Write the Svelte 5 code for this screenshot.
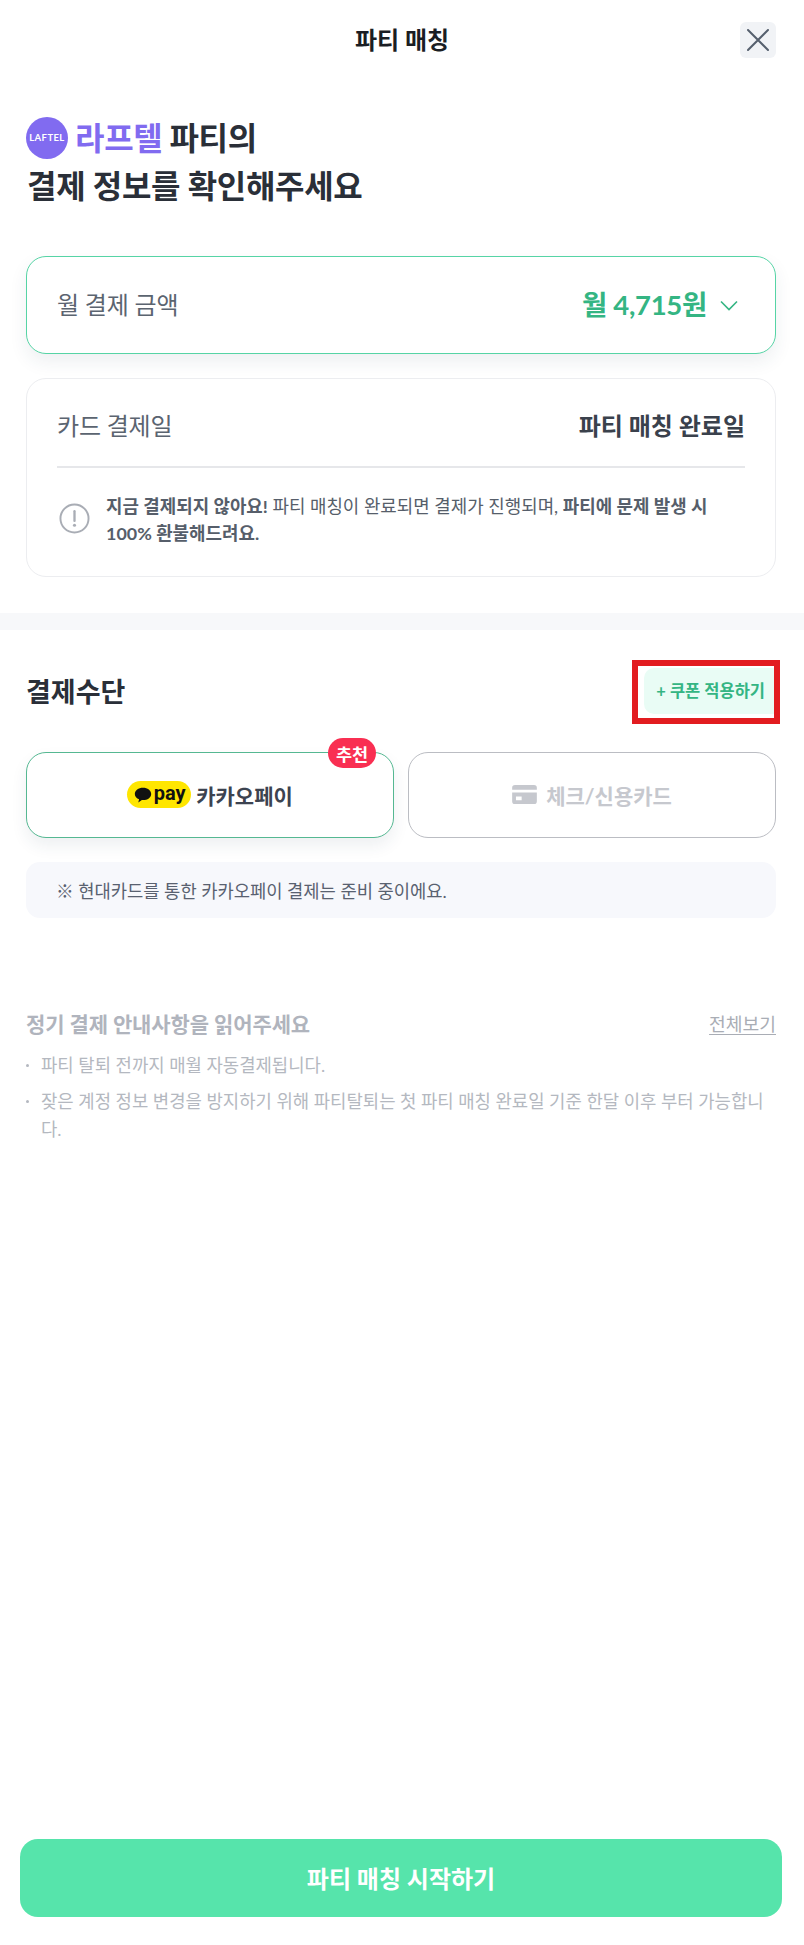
<script>
  const notices = [
    '파티 탈퇴 전까지 매월 자동결제됩니다.',
    '잦은 계정 정보 변경을 방지하기 위해 파티탈퇴는 첫 파티 매칭 완료일 기준 한달 이후 부터 가능합니다.'
  ];
</script>

<div class="page">
  <header class="top">
    <h1>파티 매칭</h1>
    <button class="close" aria-label="닫기">
      <svg width="22" height="22" viewBox="0 0 22 22" fill="none" stroke="#56606e" stroke-width="2" stroke-linecap="round"><path d="M1 1 21 21M21 1 1 21"/></svg>
    </button>
  </header>

  <section class="intro">
    <div class="line">
      <span class="logo">LAFTEL</span>
      <span class="brand">라프텔</span>
      <span>파티의</span>
    </div>
    <div class="line second">결제 정보를 확인해주세요</div>
  </section>

  <section class="cards">
    <div class="card price">
      <span class="label">월 결제 금액</span>
      <span class="amount">월 4,715원
        <svg width="18" height="11" viewBox="0 0 18 11" fill="none" stroke="#34b583" stroke-width="1.6"><path d="M1 1.500 9 9.500 17 1.500"/></svg>
      </span>
    </div>
    <div class="card detail">
      <div class="row">
        <span class="label">카드 결제일</span>
        <strong>파티 매칭 완료일</strong>
      </div>
      <div class="info">
        <svg width="31" height="31" viewBox="0 0 32 32" fill="none" stroke="#a9adb5"><circle cx="16" cy="16" r="14.500" stroke-width="2"/><path d="M16 8.500v10" stroke-width="2.400" stroke-linecap="round"/><circle cx="16" cy="23" r="1.600" fill="#a9adb5" stroke="none"/></svg>
        <p><b>지금 결제되지 않아요!</b> 파티 매칭이 완료되면 결제가 진행되며, <b>파티에 문제 발생 시 100% 환불해드려요.</b></p>
      </div>
    </div>
  </section>

  <div class="band"></div>

  <section class="pay">
    <div class="pay-head">
      <h2>결제수단</h2>
      <div class="coupon-mark"><button class="coupon">+ 쿠폰 적용하기</button></div>
    </div>
    <div class="methods">
      <button class="method active">
        <span class="badge">추천</span>
        <span class="kakao">
          <svg width="20" height="18" viewBox="0 0 22 19"><path fill="#111" d="M11 1.500c5 0 9 3 9 6.800s-4 6.800-9 6.800l-1.200-.1-4 2.700.9-3.600C4 13.200 2 10.900 2 8.300 2 4.500 6 1.500 11 1.500z"/></svg>
          <span>pay</span>
        </span>
        카카오페이
      </button>
      <button class="method">
        <svg width="25" height="19" viewBox="0 0 26 20"><path fill="#c6c8ce" d="M3 0h20a3 3 0 0 1 3 3v2H0V3a3 3 0 0 1 3-3zM0 8h26v9a3 3 0 0 1-3 3H3a3 3 0 0 1-3-3zm4 4v4h6v-4z"/></svg>
        체크/신용카드
      </button>
    </div>
    <div class="note">※ 현대카드를 통한 카카오페이 결제는 준비 중이에요.</div>
  </section>

  <section class="guide">
    <div class="guide-head">
      <h3>정기 결제 안내사항을 읽어주세요</h3>
      <a href="#all">전체보기</a>
    </div>
    <ul>
      {#each notices as notice}
        <li>{notice}</li>
      {/each}
    </ul>
  </section>

  <div class="cta"><button>파티 매칭 시작하기</button></div>
</div>

<style>
  :global(body) { margin: 0; background: #fff; }
  * { box-sizing: border-box; }
  .page {
    width: 804px; min-height: 1945px; display: flex; flex-direction: column;
    font-family: Lato, "Noto Sans CJK KR", sans-serif; color: #2a2f38; background: #fff;
  }
  button { font-family: inherit; border: 0; background: none; padding: 0; }
  h1, h2, h3, p, ul { margin: 0; padding: 0; }

  .top { position: relative; height: 80px; display: flex; align-items: center; justify-content: center; }
  h1 { font-size: 24px; font-weight: 700; color: #1a1d23; line-height: 1; }
  .close {
    position: absolute; left: 740px; top: 22px; width: 36px; height: 36px; border-radius: 6px;
    background: #f1f3f6; display: flex; align-items: center; justify-content: center;
  }

  .intro { padding: 36px 26px 0; height: 176px; font-size: 32px; font-weight: 700; }
  .line { display: flex; align-items: center; gap: 7px; height: 44px; line-height: 44px; letter-spacing: -0.3px; }
  .second { margin-top: 4px; padding-left: 1px; }
  .logo {
    width: 42px; height: 42px; border-radius: 50%; background: #816bf0; color: #fff;
    font-size: 9.500px; font-weight: 700; display: flex; align-items: center; justify-content: center; letter-spacing: .4px;
  }
  .brand { color: #816bf0; }

  .cards { padding: 0 28px 0 26px; display: flex; flex-direction: column; gap: 24px; }
  .card { width: 750px; background: #fff; border-radius: 20px; }
  .price {
    height: 98px; border: 1px solid #56d4a5; padding: 0 37px 4px 30px;
    display: flex; align-items: center; justify-content: space-between;
    box-shadow: 0 8px 18px rgba(40, 60, 90, .08);
  }
  .label { font-size: 24px; color: #5b6470; font-weight: 400; letter-spacing: -0.2px; }
  .amount { font-size: 27.500px; font-weight: 700; color: #34b583; display: flex; align-items: center; gap: 13px; letter-spacing: -0.3px; }
  .amount svg { margin-top: 4px; }
  .detail { height: 199px; border: 1px solid #ecedf0; padding: 0 30px; }
  .row {
    height: 89px; border-bottom: 2px solid #e6e7ea; padding-top: 3px;
    display: flex; align-items: center; justify-content: space-between;
  }
  .row strong { font-size: 24px; font-weight: 700; color: #3a414c; }
  .info { display: flex; align-items: flex-start; gap: 16px; padding: 25px 2px 0 2px; }
  .info svg { flex: none; margin-top: 10px; }
  .info p { font-size: 17.900px; line-height: 27px; color: #565e6a; }
  .info b { font-weight: 700; }

  .band { height: 17px; background: #f7f8fa; margin-top: 36px; }

  .pay { padding: 0 28px 0 26px; }
  .pay-head { height: 122px; display: flex; align-items: flex-start; justify-content: space-between; position: relative; }
  h2 { font-size: 27px; font-weight: 700; margin-top: 42px; line-height: 40px; color: #2a2f38; }
  .coupon-mark {
    position: absolute; right: -4px; top: 30px; width: 148px; height: 64px;
    border: 6px solid #e21c20; background: #fff; padding: 2px 0 0 6px;
  }
  .coupon {
    width: 100%; height: 46px; background: #e9fcf5; color: #34b583; border-radius: 10px 0 0 10px;
    font-size: 16.500px; font-weight: 700; white-space: nowrap; text-align: right; padding: 0 9px 3px 0;
  }
  .methods { display: grid; grid-template-columns: 368px 368px; gap: 14px; }
  .method {
    position: relative; height: 86px; border-radius: 20px; border: 1px solid #bbbdc3; background: #fff;
    display: flex; align-items: center; justify-content: center; gap: 9px; padding-bottom: 1px;
    font-size: 21px; font-weight: 700; color: #c6c8ce;
  }
  .active { border-color: #55b892; color: #3c4350; box-shadow: 0 8px 16px rgba(40, 60, 90, .08); gap: 5px; }
  .badge {
    position: absolute; left: 301px; top: -15px; width: 48px; height: 30px; border-radius: 15px;
    background: #f92f52; color: #fff; font-size: 17.500px; font-weight: 700;
    display: flex; align-items: center; justify-content: center;
  }
  .kakao {
    width: 64px; height: 27px; border-radius: 14px; background: #ffe600; color: #111;
    display: flex; align-items: center; justify-content: center; gap: 1px;
    font-family: Roboto, sans-serif; font-size: 20px; font-weight: 700; line-height: 1;
  }
  .kakao span { margin-top: -3px; }
  .note {
    margin-top: 24px; width: 750px; height: 56px; border-radius: 14px; background: #f7f8fc;
    display: flex; align-items: center; padding: 0 0 1px 30px; font-size: 17.700px; color: #596170;
  }

  .guide { padding: 84px 28px 0 26px; }
  .guide-head { display: flex; justify-content: space-between; align-items: center; height: 42px; }
  h3 { font-size: 21px; font-weight: 700; color: #b0b4bd; letter-spacing: -0.1px; }
  .guide-head a { font-size: 18.200px; color: #a9adb5; text-decoration: underline; text-underline-offset: 3px; }
  ul { list-style: none; margin-top: 7px; }
  li { position: relative; padding-left: 15px; font-size: 17.800px; line-height: 28px; color: #b4b8c0; margin-bottom: 8px; }
  li::before {
    content: ""; position: absolute; left: 0; top: 13px; width: 3px; height: 3px; border-radius: 50%; background: #b4b8c0;
  }

  .cta { margin-top: auto; padding: 0 22px 28px 20px; }
  .cta button {
    width: 762px; height: 78px; border-radius: 18px; background: #56e4ab; color: #fff;
    font-size: 24px; font-weight: 700; padding-bottom: 1px;
  }
</style>
